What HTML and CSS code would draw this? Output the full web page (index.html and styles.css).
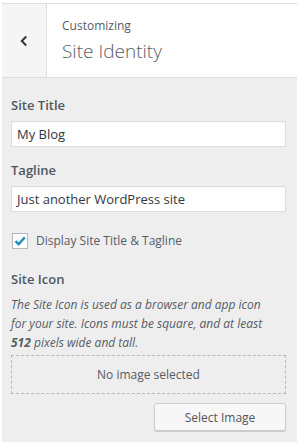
FILE: index.html
```html
<!DOCTYPE html>
<html>
<head>
<meta charset="utf-8">
<link rel="stylesheet" href="styles.css">
</head>
<body>
<div class="panel">
  <div class="header">
    <div class="back">
      <svg width="10" height="12" viewBox="0 0 10 12"><path d="M7.2 1.5 L2.8 6 L7.2 10.5" fill="none" stroke="#32373c" stroke-width="2"/></svg>
    </div>
    <div class="titles">
      <div class="crumb">Customizing</div>
      <div class="title">Site Identity</div>
    </div>
  </div>
  <div class="content">
    <div class="label first">Site Title</div>
    <div class="input">My Blog</div>
    <div class="label">Tagline</div>
    <div class="input">Just another WordPress site</div>
    <div class="check-row">
      <span class="checkbox"><svg width="14" height="14" viewBox="0 0 14 14"><path d="M2.5 7.2 L5.6 10.2 L11.8 3.2" fill="none" stroke="#1e8cbe" stroke-width="2.4"/></svg></span>
      <span class="check-label">Display Site Title &amp; Tagline</span>
    </div>
    <div class="label icon-label">Site Icon</div>
    <div class="desc">The Site Icon is used as a browser and app icon for your site. Icons must be square, and at least <b>512</b> pixels wide and tall.</div>
    <div class="placeholder">No image selected</div>
    <div class="actions"><span class="button">Select Image</span></div>
  </div>
</div>
</body>
</html>
```
FILE: styles.css
```css
html, body { margin: 0; padding: 0; background: #fff; }
body { font-family: "Open Sans", "Noto Sans", sans-serif; color: #555d66; }
.panel { margin: 3px 3px 0 2px; background: #eeeeee; height: 439px; }
.header { display: flex; height: 73px; background: #fff; border-top: 1px solid #dddddd; border-bottom: 1px solid #dddddd; }
.back { width: 44px; background: #f5f5f5; border-right: 1px solid #dddddd; display: flex; align-items: center; justify-content: center; }
.titles { padding: 13px 0 0 15px; }
.crumb { font-size: 12px; line-height: 18px; color: #555d66; }
.title { font-size: 19px; line-height: 26px; font-weight: 300; color: #555d66; margin-top: 3px; }
.content { padding: 0 11px 0 9px; }
.label { font-size: 13px; font-weight: 600; line-height: 20px; color: #50575e; margin: 13px 0 6px; }
.label.first { margin-top: 17px; }
.input { height: 24px; background: #fff; border: 1px solid #dddddd; box-shadow: inset 0 1px 2px rgba(0,0,0,0.04); font-size: 13px; line-height: 24px; padding: 0 5px; color: #32373c; }
.check-row { display: flex; align-items: center; margin-top: 21px; height: 16px; }
.checkbox { width: 14px; height: 14px; border: 1px solid #b4b9be; background: #fff; display: flex; align-items: center; justify-content: center; margin: 0 8px 0 1px; }
.check-label { font-size: 12px; line-height: 16px; color: #555d66; }
.icon-label { margin: 20px 0 6px; }
.desc { font-size: 12px; line-height: 19px; font-style: italic; color: #555d66; padding-right: 9px; }
.desc b { font-weight: 700; }
.placeholder { margin-top: 3px; height: 37px; border: 1px dashed #b4b9be; display: flex; align-items: center; justify-content: center; font-size: 12px; color: #555d66; }
.actions { display: flex; justify-content: flex-end; margin-top: 9px; }
.button { width: 130px; height: 26px; border: 1px solid #cccccc; border-radius: 3px; background: #f7f7f7; box-shadow: 0 1px 0 #cccccc; display: flex; align-items: center; justify-content: center; font-size: 12px; color: #555555; }
```
